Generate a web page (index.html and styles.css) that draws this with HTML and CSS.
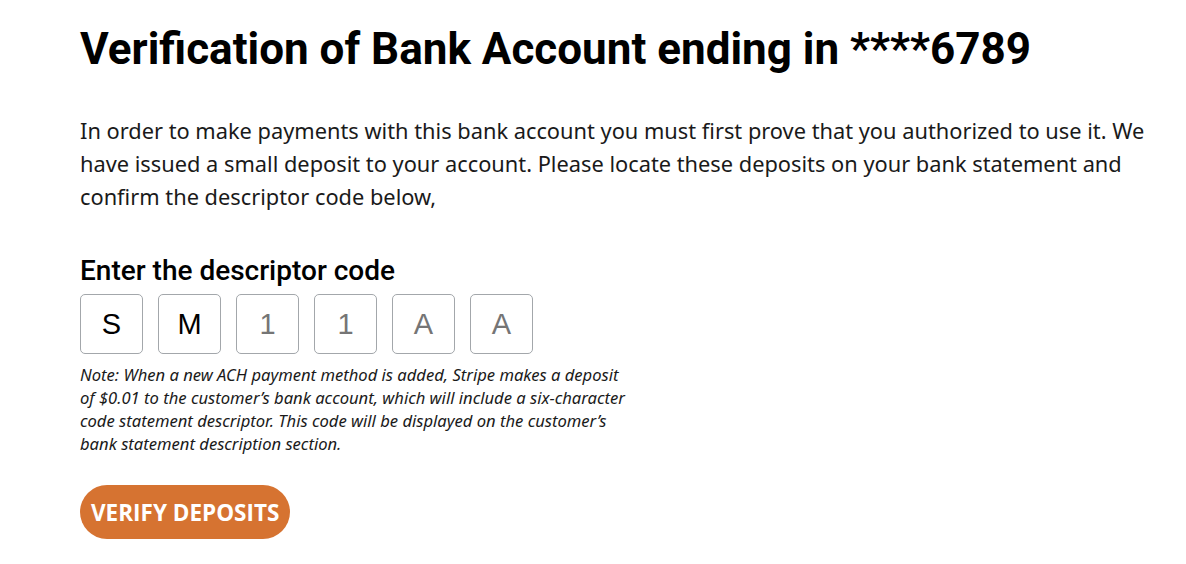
FILE: index.html
```html
<!DOCTYPE html>
<html lang="en">
<head>
<meta charset="utf-8">
<title>Verify Bank Account</title>
<link rel="stylesheet" href="styles.css">
</head>
<body>
<main class="page">
  <h1 class="title">Verification of Bank Account ending in ****6789</h1>
  <p class="intro">In order to make payments with this bank account you must first prove that you authorized to use it. We have issued a small deposit to your account. Please locate these deposits on your bank statement and confirm the descriptor code below,</p>
  <h2 class="label">Enter the descriptor code</h2>
  <div class="code">
    <div class="box filled">S</div>
    <div class="box filled">M</div>
    <div class="box">1</div>
    <div class="box">1</div>
    <div class="box">A</div>
    <div class="box">A</div>
  </div>
  <p class="note">Note: When a new ACH payment method is added, Stripe makes a deposit of $0.01 to the customer’s bank account, which will include a six-character code statement descriptor. This code will be displayed on the customer’s bank statement description section.</p>
  <button class="verify" type="button">VERIFY DEPOSITS</button>
</main>
</body>
</html>
```

FILE: styles.css
```css
* { box-sizing: border-box; }
html, body { margin: 0; background: #fff; }
body { font-family: "Noto Sans", "Open Sans", sans-serif; color: #1a1a1a; }
.page {
  padding: 22px 0 0 80px;
  display: flex;
  flex-direction: column;
  align-items: flex-start;
}
.title {
  margin: 0;
  font-family: Roboto, sans-serif;
  font-weight: 700;
  font-size: 44px;
  line-height: 54px;
  color: #000;
}
.intro {
  margin: 38px 0 0;
  width: 1080px;
  font-size: 21.8px;
  line-height: 33px;
  color: #1a1a1a;
}
.label {
  margin: 42px 0 0;
  font-family: Roboto, sans-serif;
  font-weight: 500;
  font-size: 28px;
  line-height: 32px;
  color: #000;
}
.code {
  margin-top: 7px;
  display: flex;
  gap: 15px;
}
.box {
  width: 63px;
  height: 60px;
  border: 1px solid #a3a7ab;
  border-radius: 5px;
  display: flex;
  align-items: center;
  justify-content: center;
  font-family: "Liberation Sans", Arial, sans-serif;
  font-size: 29px;
  color: #757575;
}
.box.filled { color: #000; }
.note {
  margin: 9px 0 0;
  width: 548px;
  font-style: italic;
  font-size: 16.6px;
  line-height: 23px;
  color: #1a1a1a;
}
.verify {
  margin-top: 30px;
  height: 54px;
  padding: 0 11px;
  border: none;
  border-radius: 27px;
  background: #d67331;
  color: #fff;
  font-family: "Open Sans", sans-serif;
  font-weight: 700;
  font-size: 22.5px;
  cursor: pointer;
}
```
